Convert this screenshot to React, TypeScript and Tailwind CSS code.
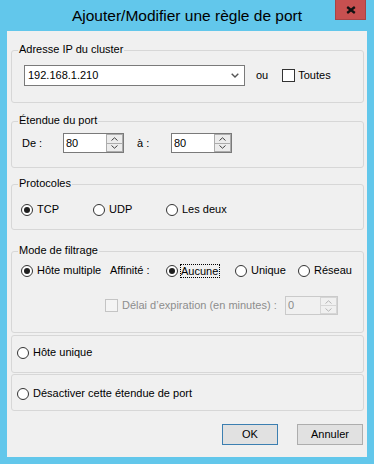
import React from "react";

function Radio({ checked }: { checked?: boolean }) {
  return (
    <span className="w-[12px] h-[12px] rounded-full border border-[#333333] bg-white flex items-center justify-center shrink-0">
      {checked && <span className="w-[6px] h-[6px] rounded-full bg-[#1e1e1e]" />}
    </span>
  );
}

function Check({ disabled }: { disabled?: boolean }) {
  return (
    <span
      className={
        disabled
          ? "w-[13px] h-[13px] border border-[#c4c4c4] bg-[#f4f4f4] shrink-0"
          : "w-[13px] h-[13px] border border-[#333333] bg-white shrink-0"
      }
    />
  );
}

function Chevron({ up, color }: { up?: boolean; color: string }) {
  return (
    <svg width="7" height="4" viewBox="0 0 7 4">
      <polyline
        points={up ? "0.5,3.5 3.5,0.8 6.5,3.5" : "0.5,0.5 3.5,3.2 6.5,0.5"}
        fill="none"
        stroke={color}
        strokeWidth="1"
      />
    </svg>
  );
}

function Spin({ value, className, disabled }: { value: string; className: string; disabled?: boolean }) {
  const arrow = disabled ? "#b5b5b5" : "#404040";
  return (
    <div
      className={
        (disabled ? "border-[#cacaca] bg-[#f0f0f0] text-[#8a8a8a] " : "border-[#7a7a7a] bg-white text-black ") +
        "flex border " +
        className
      }
    >
      <span className="flex-1 flex items-center pl-[2px]">{value}</span>
      <div className="w-[17px] flex flex-col">
        <div
          className={
            (disabled ? "border-[#d6d6d6] bg-[#f0f0f0] " : "border-[#acacac] bg-[#ececec] ") +
            "flex-1 border flex items-center justify-center"
          }
        >
          <Chevron up color={arrow} />
        </div>
        <div
          className={
            (disabled ? "border-[#d6d6d6] bg-[#f0f0f0] " : "border-[#acacac] bg-[#ececec] ") +
            "flex-1 border border-t-0 flex items-center justify-center"
          }
        >
          <Chevron color={arrow} />
        </div>
      </div>
    </div>
  );
}

function Legend({ children }: { children: React.ReactNode }) {
  return (
    <span className="-mt-[8px] ml-[6px] px-[1px] self-start h-[13px] leading-[13px] bg-[#f0f0f0] text-black">
      {children}
    </span>
  );
}

export default function App() {
  return (
    <div className="w-[374px] h-[464px] bg-[#62c7eb] flex flex-col font-['Liberation_Sans',Arial,sans-serif] text-[11px] text-black overflow-hidden">
      {/* Title bar */}
      <div className="relative h-[31px] shrink-0 flex items-center justify-center">
        <span className="text-[15.5px] leading-[31px] text-[#000000]">Ajouter/Modifier une règle de port</span>
        <div className="absolute right-[8px] top-0 w-[31px] h-[20px] bg-[#c75050] border border-t-0 border-[#a84444] flex items-center justify-center">
          <svg width="10" height="8" viewBox="0 0 10 8">
            <path d="M1.2 1 L8.8 7 M8.8 1 L1.2 7" stroke="#111111" strokeWidth="2.3" />
          </svg>
        </div>
      </div>

      {/* Client area */}
      <div className="mx-[7px] h-[426px] shrink-0 bg-[#f0f0f0] flex flex-col pl-[4px] pr-[3px]">
        {/* Group 1 */}
        <div className="mt-[19px] h-[53px] border border-[#d7d7d7] rounded-[3px] flex flex-col">
          <Legend>Adresse IP du cluster</Legend>
          <div className="mt-[9px] flex items-center h-[21px]">
            <div className="ml-[12px] w-[221px] h-[21px] border border-[#7a7a7a] bg-white flex items-center">
              <span className="flex-1 pl-[3px]">192.168.1.210</span>
              <span className="mr-[5px] flex items-center">
                <svg width="8" height="5" viewBox="0 0 8 5">
                  <polyline points="0.7,0.7 4,4 7.3,0.7" fill="none" stroke="#555555" strokeWidth="1.4" />
                </svg>
              </span>
            </div>
            <span className="ml-[11px]">ou</span>
            <span className="ml-[14px] flex items-center">
              <Check />
              <span className="ml-[3px]">Toutes</span>
            </span>
          </div>
        </div>

        {/* Group 2 */}
        <div className="mt-[18px] h-[47px] border border-[#d7d7d7] rounded-[3px] flex flex-col">
          <Legend>Étendue du port</Legend>
          <div className="mt-[6px] flex items-center h-[20px]">
            <span className="ml-[10px] w-[41px]">De :</span>
            <Spin value="80" className="w-[61px] h-[20px]" />
            <span className="ml-[13px] w-[34px]">à :</span>
            <Spin value="80" className="w-[61px] h-[20px]" />
          </div>
        </div>

        {/* Group 3 */}
        <div className="mt-[16px] h-[46px] border border-[#d7d7d7] rounded-[3px] flex flex-col">
          <Legend>Protocoles</Legend>
          <div className="mt-[13px] flex items-center h-[13px]">
            <span className="ml-[9px] w-[72px] flex items-center">
              <Radio checked />
              <span className="ml-[4px]">TCP</span>
            </span>
            <span className="w-[73px] flex items-center">
              <Radio />
              <span className="ml-[4px]">UDP</span>
            </span>
            <span className="flex items-center">
              <Radio />
              <span className="ml-[4px]">Les deux</span>
            </span>
          </div>
        </div>

        {/* Group 4 */}
        <div className="mt-[21px] h-[82px] border border-[#d7d7d7] rounded-[3px] flex flex-col">
          <Legend>Mode de filtrage</Legend>
          <div className="mt-[6px] flex items-center h-[15px]">
            <span className="ml-[9px] w-[89px] flex items-center">
              <Radio checked />
              <span className="ml-[4px]">Hôte multiple</span>
            </span>
            <span className="w-[56px]">Affinité :</span>
            <span className="w-[69px] flex items-center">
              <Radio checked />
              <span className="ml-[2px] border border-dotted border-black leading-[12px] pr-[1px]">Aucune</span>
            </span>
            <span className="w-[63px] flex items-center">
              <Radio />
              <span className="ml-[4px]">Unique</span>
            </span>
            <span className="flex items-center">
              <Radio />
              <span className="ml-[4px]">Réseau</span>
            </span>
          </div>
          <div className="mt-[18px] flex items-center h-[19px]">
            <span className="ml-[93px] flex items-center">
              <Check disabled />
            </span>
            <span className="ml-[4px] w-[163px] text-[#8d8d8d]">Délai d’expiration (en minutes) :</span>
            <Spin value="0" disabled className="w-[53px] h-[19px]" />
          </div>
        </div>

        {/* Group 5 */}
        <div className="mt-[2px] h-[38px] border border-[#d7d7d7] rounded-[3px] flex flex-col">
          <div className="mt-[10px] flex items-center h-[13px]">
            <span className="ml-[5px] flex items-center">
              <Radio />
              <span className="ml-[4px]">Hôte unique</span>
            </span>
          </div>
        </div>

        {/* Group 6 */}
        <div className="mt-[1px] h-[37px] border border-[#d7d7d7] rounded-[3px] flex flex-col">
          <div className="mt-[12px] flex items-center h-[13px]">
            <span className="ml-[5px] flex items-center">
              <Radio />
              <span className="ml-[4px]">Désactiver cette étendue de port</span>
            </span>
          </div>
        </div>

        {/* Buttons */}
        <div className="mt-[13px] flex justify-end">
          <button className="w-[56px] h-[21px] bg-[#e1e1e1] border border-[#3c7fb1] flex items-center justify-center text-black">
            OK
          </button>
          <button className="ml-[19px] mr-[1px] w-[66px] h-[21px] bg-[#e1e1e1] border border-[#adadad] flex items-center justify-center text-black">
            Annuler
          </button>
        </div>
      </div>
    </div>
  );
}
